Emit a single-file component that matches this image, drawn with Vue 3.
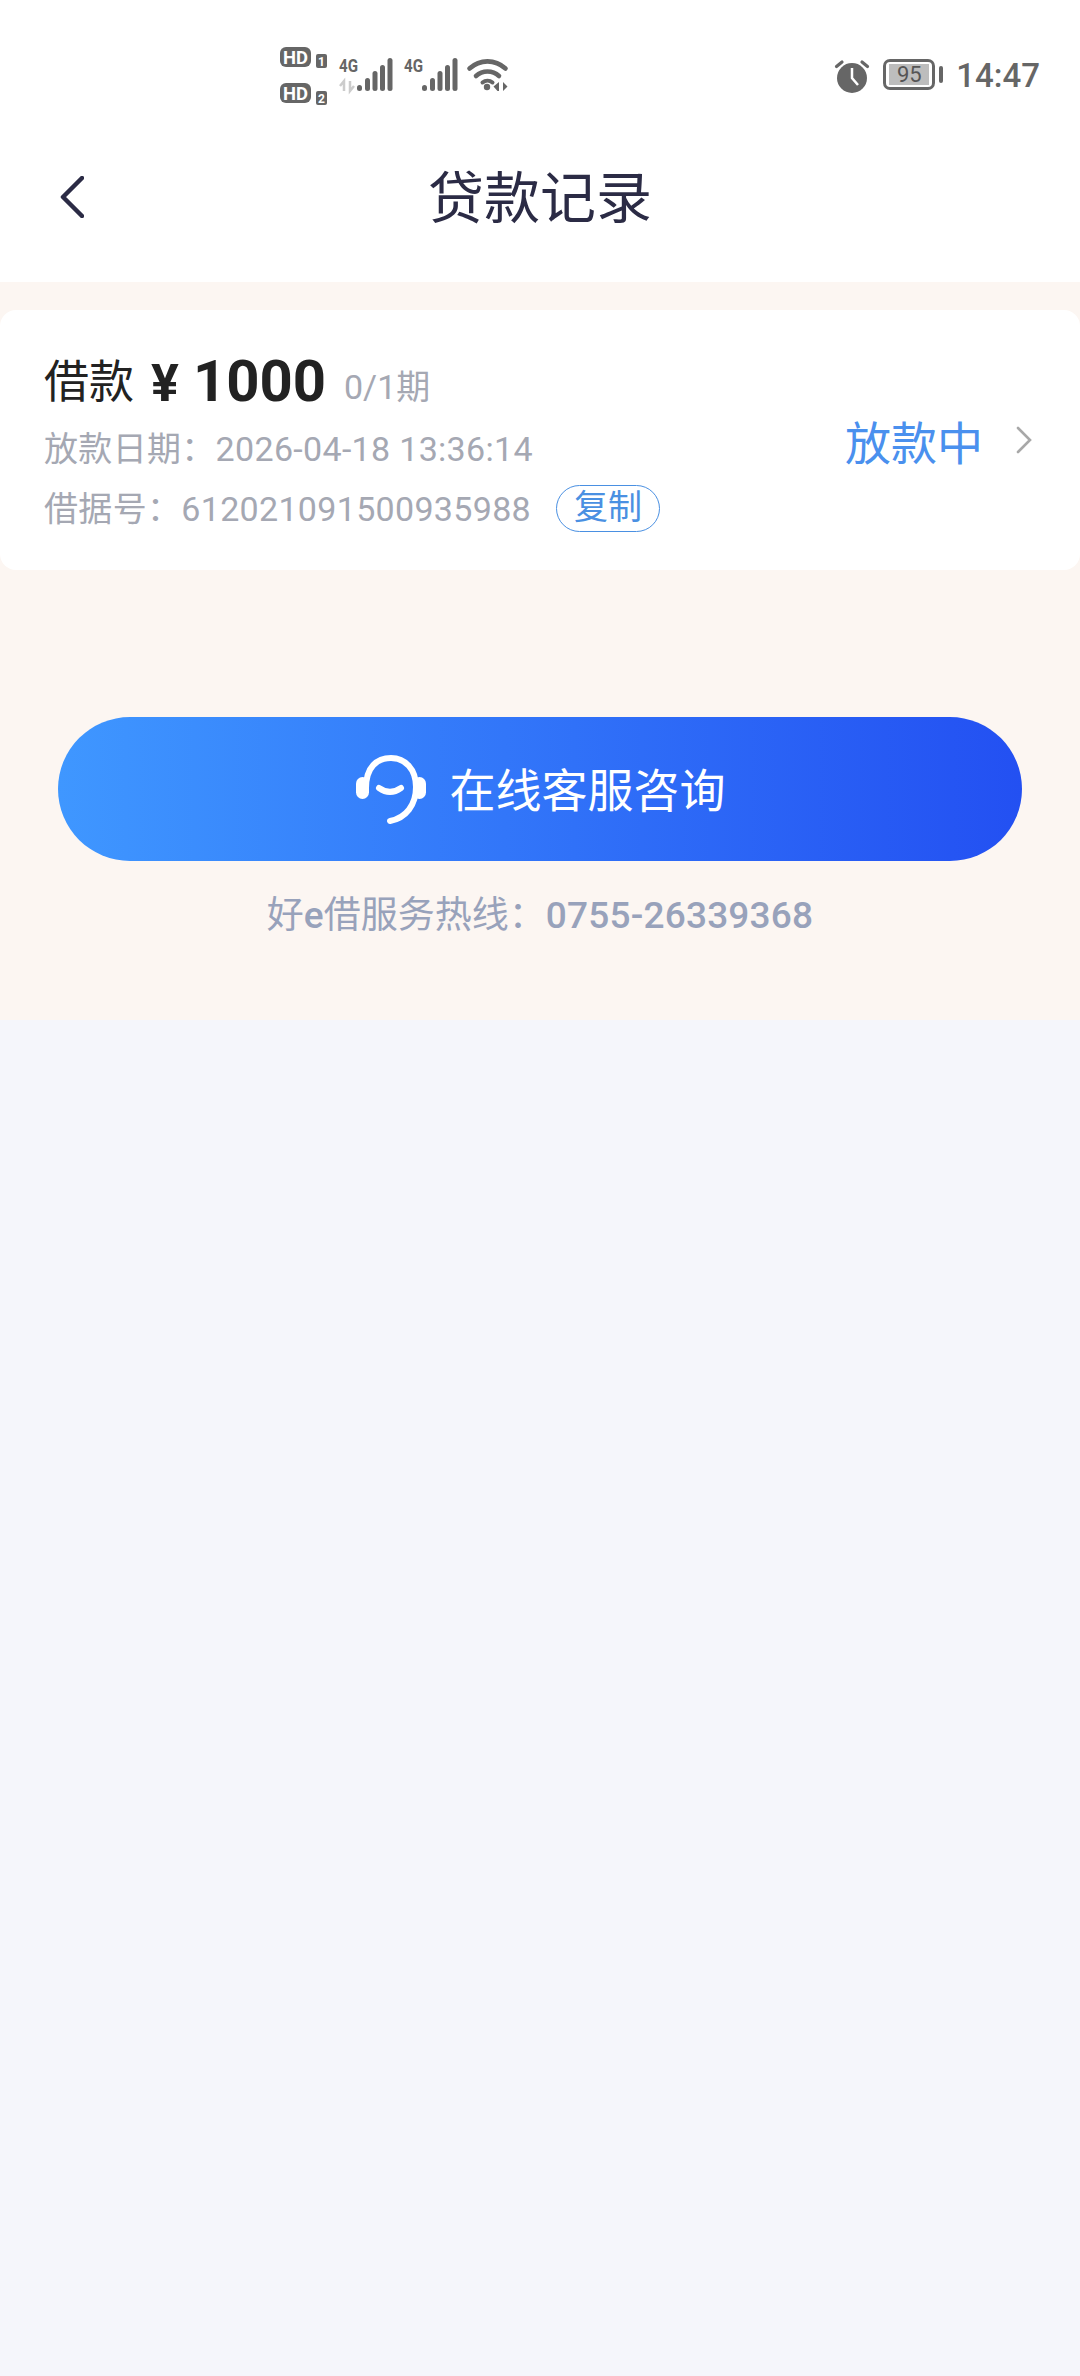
<script setup>
const signalA = [
  { x: 357, y: 85, h: 6 }, { x: 365, y: 78, h: 13 }, { x: 372.5, y: 71, h: 20 }, { x: 380, y: 65, h: 26 }, { x: 387.5, y: 58, h: 33 }
]
const signalB = [
  { x: 422, y: 85, h: 6 }, { x: 430, y: 78, h: 13 }, { x: 437.5, y: 71, h: 20 }, { x: 445, y: 65, h: 26 }, { x: 452.5, y: 58, h: 33 }
]
</script>

<template>
  <div class="page">
    <header class="head">
      <div class="status">
        <svg class="net" width="240" height="70" viewBox="280 40 240 70">
          <rect x="280" y="47" width="31" height="20" rx="6" fill="#666" />
          <text x="283" y="63.5" class="hd" textLength="25" lengthAdjust="spacingAndGlyphs">HD</text>
          <rect x="316" y="54" width="11" height="14" rx="2" fill="#666" />
          <text x="321.5" y="65.5" class="sim">1</text>
          <rect x="280" y="83" width="31" height="20" rx="6" fill="#666" />
          <text x="283" y="99.5" class="hd" textLength="25" lengthAdjust="spacingAndGlyphs">HD</text>
          <rect x="316" y="91" width="11" height="14" rx="2" fill="#666" />
          <text x="321.5" y="102.5" class="sim">2</text>

          <text x="339" y="72" class="g4" textLength="19" lengthAdjust="spacingAndGlyphs">4G</text>
          <path d="M344 91V81l-4 5M350 81v10l4-5" fill="none" stroke="#ccc" stroke-width="2.5" />
          <rect v-for="b in signalA" :key="b.x" :x="b.x" :y="b.y" width="5" :height="b.h" rx="2.5" fill="#666" />
          <text x="404" y="72" class="g4" textLength="19" lengthAdjust="spacingAndGlyphs">4G</text>
          <rect v-for="b in signalB" :key="b.x" :x="b.x" :y="b.y" width="5" :height="b.h" rx="2.5" fill="#666" />

          <path d="M469.5 68.5c10.5-9.500 25.500-9.500 36 0" fill="none" stroke="#666" stroke-width="4.6" stroke-linecap="round" />
          <path d="M476 76c6.500-6 16.500-6 23 0" fill="none" stroke="#666" stroke-width="4.6" stroke-linecap="round" />
          <path d="M482.500 82.500c3-2.500 7-2.500 10 0" fill="none" stroke="#666" stroke-width="4" stroke-linecap="round" />
          <circle cx="487" cy="87" r="3.200" fill="#666" />
          <path d="M499 82v9h-1.500l-4-4.500zM503 82l4.500 4.500-4.500 4.500z" fill="#666" />
        </svg>
        <div class="status-right">
          <svg width="36" height="36" viewBox="0 0 36 36">
            <circle cx="18" cy="20" r="15" fill="#666" />
            <path d="M18 10v10l6 7" fill="none" stroke="#fff" stroke-width="2.500" />
            <path d="M2.500 8.500 8 4M33.500 8.500 28 4" fill="none" stroke="#666" stroke-width="3.200" stroke-linecap="round" />
          </svg>
          <div class="battery">
            <div class="cell"><span>95</span></div>
            <i class="tip"></i>
          </div>
          <span class="time">14:47</span>
        </div>
      </div>
      <div class="nav">
        <svg class="back" width="24" height="42" viewBox="0 0 24 42">
          <path d="M22 2 3 21l19 19" fill="none" stroke="#2b2b45" stroke-width="4.500" stroke-linecap="round" stroke-linejoin="round" />
        </svg>
        <h1 class="title">贷款记录</h1>
      </div>
    </header>

    <section class="warm">
      <article class="card">
        <div class="info">
          <div class="amount">
            <span class="label">借款</span>
            <span class="yen">¥</span>
            <span class="num">1000</span>
            <span class="term">0/1期</span>
          </div>
          <div class="line">放款日期：2026-04-18 13:36:14</div>
          <div class="line line-no">
            <span>借据号：612021091500935988</span>
            <span class="copy">复制</span>
          </div>
        </div>
        <div class="state">
          <span>放款中</span>
          <svg width="16" height="28" viewBox="0 0 16 28">
            <path d="M2 2l12 12L2 26" fill="none" stroke="#a8a8a8" stroke-width="2.600" stroke-linecap="round" />
          </svg>
        </div>
      </article>

      <button class="service">
        <svg width="72" height="72" viewBox="0 0 72 72">
          <path d="M11 35C11 14 22 5 36 5s25 11 25 29c0 18-10 31-26 34" fill="none" stroke="#fff" stroke-width="6" stroke-linecap="round" />
          <rect x="1" y="24" width="13" height="22" rx="6.500" fill="#fff" />
          <rect x="58" y="24" width="13" height="22" rx="6.500" fill="#fff" />
          <path d="M24 35c7 5 15 5 22 0" fill="none" stroke="#fff" stroke-width="6" stroke-linecap="round" />
        </svg>
        <span class="service-text">在线客服咨询</span>
      </button>

      <p class="hotline">好<b>e</b>借服务热线：<b>0755-26339368</b></p>
    </section>
  </div>
</template>

<style>
html, body { margin: 0; background: #f5f6fb; }
</style>

<style scoped>
.page {
  width: 1080px;
  height: 2376px;
  background: #f5f6fb;
  font-family: Roboto, "Noto Sans CJK SC", sans-serif;
  overflow: hidden;
}
.head { height: 282px; background: #fff; }
.status {
  display: flex;
  justify-content: space-between;
  padding: 40px 40px 0 280px;
  height: 70px;
}
.net { display: block; }
.hd { font: 700 18px Roboto, sans-serif; fill: #fff; }
.sim { font: 700 12px Roboto, sans-serif; fill: #fff; text-anchor: middle; }
.g4 { font: 700 19px Roboto, sans-serif; fill: #666; }
.status-right { display: flex; align-items: flex-start; gap: 13px; height: 56px; padding-top: 19px; margin-top: -1px; }
.battery { display: flex; align-items: center; gap: 4px; height: 31px; margin-top: 1px; }
.cell {
  width: 52px;
  height: 31px;
  box-sizing: border-box;
  border: 3px solid #666;
  border-radius: 7px;
  padding: 2px 3px;
}
.cell span {
  display: block;
  height: 100%;
  background: #bdbdbd;
  color: #555;
  font-size: 22px;
  line-height: 21px;
  text-align: center;
}
.tip { display: block; width: 4px; height: 17px; background: #666; border-radius: 2px; }
.time { font-size: 33px; font-weight: 500; line-height: 36px; color: #666; }
.nav {
  position: relative;
  height: 172px;
  display: flex;
  align-items: center;
  justify-content: center;
}
.back { position: absolute; left: 60px; top: 66px; }
.title { margin: 0; padding-top: 5px; font-size: 56px; font-weight: 400; color: #2b2b45; line-height: 90px; }
.warm { height: 738px; background: #fcf6f2; padding-top: 28px; box-sizing: border-box; }
.card {
  height: 260px;
  background: #fff;
  border-radius: 16px;
  display: flex;
  justify-content: space-between;
  align-items: center;
  padding: 0 48px 0 44px;
  box-sizing: border-box;
}
.info { padding-top: 4px; }
.amount { height: 73px; line-height: 70px; white-space: nowrap; }
.label { font-size: 45px; color: #222; vertical-align: 3px; }
.yen { font-size: 52px; font-weight: 700; color: #222; margin-left: 17px; }
.num { font-size: 58px; font-weight: 700; color: #222; margin-left: 14px; }
.term { font-size: 34px; color: #a5a8b3; margin-left: 18px; vertical-align: 2px; }
.line { font-size: 34px; letter-spacing: 0.32px; color: #a5a8b3; height: 60px; line-height: 60px; }
.line-no { display: flex; align-items: center; gap: 25px; }
.copy {
  width: 104px;
  height: 47px;
  box-sizing: border-box;
  border: 1px solid #4a90e2;
  border-radius: 24px;
  color: #4a90e2;
  font-size: 34px;
  letter-spacing: 0;
  line-height: 43px;
  text-align: center;
}
.state { display: flex; align-items: center; gap: 33px; color: #4a90ee; font-size: 46px; }
.service {
  display: flex;
  width: 964px;
  height: 144px;
  margin: 147px 0 0 58px;
  padding: 0;
  border: 0;
  border-radius: 72px;
  background: linear-gradient(90deg, #3f97ff, #2350f2);
  color: #fff;
  align-items: center;
  justify-content: center;
  gap: 23px;
  font-family: inherit;
  font-size: 46px;
}
.service-text { padding-bottom: 4px; }
.hotline {
  margin: 29px 0 0;
  text-align: center;
  font-size: 37px;
  line-height: 52px;
  color: #98a2bb;
}
.hotline b { font-weight: 500; letter-spacing: 0.2px; }
</style>
